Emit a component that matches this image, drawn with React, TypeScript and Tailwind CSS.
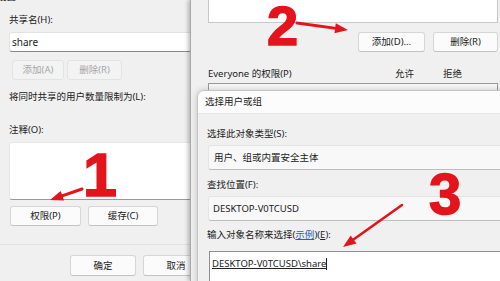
import React from 'react';

const font = { fontFamily: '"Noto Sans", "Noto Sans CJK SC", sans-serif' };
const digitFont = { fontFamily: '"Liberation Sans", sans-serif' };

function Arrow({ x1, y1, x2, y2, w = 3, head = 13, spread = 5 }: { x1: number; y1: number; x2: number; y2: number; w?: number; head?: number; spread?: number }) {
  const dx = x2 - x1;
  const dy = y2 - y1;
  const len = Math.hypot(dx, dy);
  const ux = dx / len;
  const uy = dy / len;
  const bx = x2 - head * ux;
  const by = y2 - head * uy;
  const nx = -uy;
  const ny = ux;
  const pts = `${x2},${y2} ${bx + spread * nx},${by + spread * ny} ${bx - spread * nx},${by - spread * ny}`;
  return (
    <g>
      <line x1={x1} y1={y1} x2={bx + ux} y2={by + uy} stroke="#e3141b" strokeWidth={w} strokeLinecap="round" />
      <polygon points={pts} fill="#e3141b" />
    </g>
  );
}

function Btn({ label, w, disabled }: { label: string; w: string; disabled?: boolean }) {
  return (
    <div
      className={
        disabled
          ? `${w} h-full flex items-center justify-center rounded-[3px] border border-[#e3e3e3] bg-[#f3f3f3] text-[#a6a6a6]`
          : `${w} h-full flex items-center justify-center rounded-[3px] border border-[#d6d6d6] border-b-[#c2c2c2] bg-[#fbfbfb] text-[#222]`
      }
    >
      {label}
    </div>
  );
}

export default function App() {
  return (
    <div className="relative w-[500px] h-[281px] overflow-hidden bg-[#f0f0f0] text-[9.5px] leading-[12px] text-[#222]" style={font}>
      {/* share settings window */}
      <div className="absolute left-0 top-0 w-[260px] h-full bg-[#f0f0f0] pl-[9px] flex flex-col">
        <div className="-mt-[9px] -ml-[12px] h-[12px]">设置</div>
        <div className="mt-[11px] h-[12px]">共享名(H):</div>
        <div className="mt-[6px] h-[20px] bg-white border border-[#e3e3e3] border-b-[#8a8a8a] rounded-[3px] pl-[2px] flex items-center text-[10px]">share</div>
        <div className="mt-[8px] h-[20px] ml-[3px] flex gap-[3px]">
          <Btn label="添加(A)" w="w-[52px]" disabled />
          <Btn label="删除(R)" w="w-[55px]" disabled />
        </div>
        <div className="mt-[11px] h-[12px]">将同时共享的用户数量限制为(L):</div>
        <div className="mt-[21px] h-[12px]">注释(O):</div>
        <div className="mt-[6px] h-[58px] bg-white border border-[#e6e6e6] border-b-[#9a9a9a] rounded-[3px]" />
        <div className="mt-[6px] h-[20px] ml-[1px] flex gap-[7px]">
          <Btn label="权限(P)" w="w-[71px]" />
          <Btn label="缓存(C)" w="w-[70px]" />
        </div>
        <div className="mt-[18px] -ml-[9px] h-px bg-[#e2e2e2]" />
        <div className="mt-[10px] h-[21px] ml-[61px] flex gap-[7px]">
          <Btn label="确定" w="w-[66px]" />
          <Btn label="取消" w="w-[66px]" />
        </div>
      </div>

      {/* permissions window */}
      <div className="absolute left-[190px] top-0 right-0 bottom-0 bg-[#f0f0f0] border-l border-[#a9a9a9] shadow-[-2px_0_4px_rgba(0,0,0,0.25)] pl-[17px] pr-[2px] flex flex-col">
        <div className="-mt-[20px] h-[43px] bg-white border border-[#c9c9c9]" />
        <div className="mt-[9px] h-[20px] flex justify-end gap-[8px]">
          <Btn label="添加(D)..." w="w-[67px]" />
          <Btn label="删除(R)" w="w-[65px]" />
        </div>
        <div className="mt-[16px] h-[12px] flex">
          <span className="w-[187px]">Everyone 的权限(P)</span>
          <span className="w-[48px]">允许</span>
          <span>拒绝</span>
        </div>
        <div className="mt-[3px] flex-1 bg-[#f7f7f7] border border-[#9a9a9a] border-b-0" />
      </div>

      {/* select users or groups dialog */}
      <div className="absolute left-[197px] top-[90px] w-[330px] h-[210px] rounded-tl-[7px] border border-[#c4c4c4] bg-[#f0f0f0] shadow-[0_0_6px_rgba(0,0,0,0.2)] overflow-hidden flex flex-col">
        <div className="h-[23px] shrink-0 bg-[#fcfcfc] border-b border-[#e6e6e6] pl-[7px] flex items-center">选择用户或组</div>
        <div className="pl-[9px] flex flex-col">
          <div className="mt-[14px] h-[12px]">选择此对象类型(S):</div>
          <div className="mt-[5px] h-[25px] ml-[1px] bg-[#f8f8f8] border border-[#e4e4e4] border-b-[#bdbdbd] rounded-l-[3px] pl-[5px] flex items-center">用户、组或内置安全主体</div>
          <div className="mt-[9px] h-[12px]">查找位置(F):</div>
          <div className="mt-[5px] h-[25px] ml-[1px] bg-[#f8f8f8] border border-[#e4e4e4] border-b-[#bdbdbd] rounded-l-[3px] pl-[4px] flex items-center">DESKTOP-V0TCUSD</div>
          <div className="mt-[8px] h-[12px]">
            输入对象名称来选择(<span className="text-[#1a62c4] underline">示例</span>)(<span className="underline">E</span>):
          </div>
          <div className="mt-[10px] h-[40px] ml-[2px] bg-white border border-[#8f8f8f] pl-[2px] pt-[6px]">
            <span className="underline">DESKTOP-V0TCUSD\share</span>
            <span className="inline-block w-px h-[12px] bg-[#222] align-middle" />
          </div>
        </div>
      </div>

      {/* annotations */}
      <div className="absolute inset-0 pointer-events-none">
        <svg className="absolute inset-0" width="500" height="281">
          <Arrow x1={82} y1={189} x2={50} y2={200} w={3} />
          <Arrow x1={297} y1={23} x2={348} y2={30} w={3} />
          <Arrow x1={402} y1={205} x2={343} y2={247} w={2.6} />
        </svg>
        <span className="absolute left-[83px] top-[145px] text-[61px] leading-none font-bold text-[#e3141b] [-webkit-text-stroke:1.5px_#e3141b]" style={digitFont}>1</span>
        <span className="absolute left-[267px] top-[4px] text-[56px] leading-[44px] font-bold text-[#e3141b] [-webkit-text-stroke:1.5px_#e3141b]" style={digitFont}>2</span>
        <span className="absolute left-[429px] top-[171px] text-[58px] leading-[46px] font-bold text-[#e3141b] [-webkit-text-stroke:1.5px_#e3141b]" style={digitFont}>3</span>
      </div>
    </div>
  );
}
